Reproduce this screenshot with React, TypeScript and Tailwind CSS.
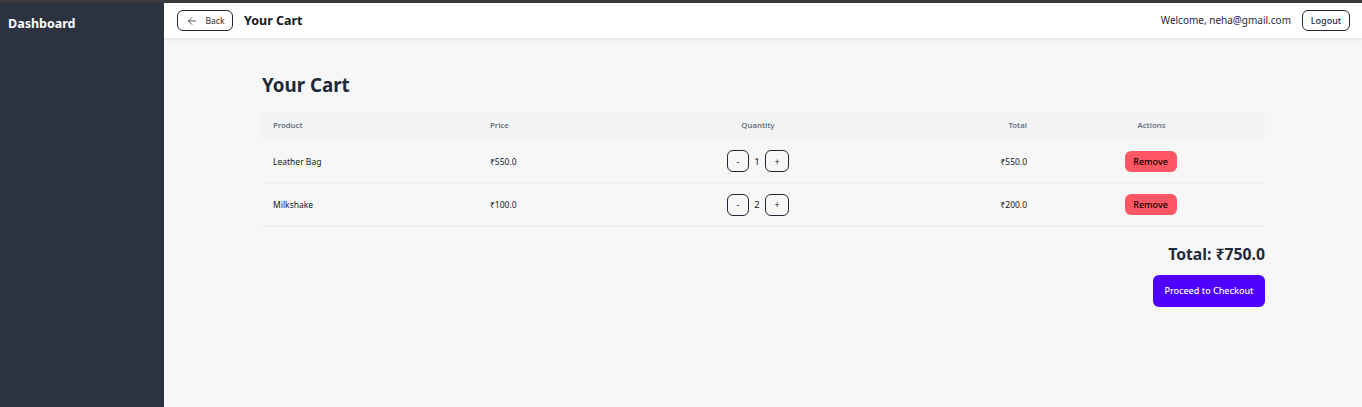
import React from 'react';
import { ArrowLeft } from 'lucide-react';

const items = [
    { name: 'Leather Bag', price: '₹550.0', qty: 1, total: '₹550.0' },
    { name: 'Milkshake', price: '₹100.0', qty: 2, total: '₹200.0' }
];

const QtyButton: React.FC<{ label: string; wide?: boolean }> = ({ label, wide }) => (
    <button className={`h-[22px] ${wide ? 'w-6' : 'w-[22px]'} flex items-center justify-center rounded-md border border-[#1f2937] text-[9px] text-[#111827]`}>
        {label}
    </button>
);

export default function App() {
    return (
        <div className="h-[407px] w-[1362px] overflow-hidden flex flex-col bg-[#f7f7f7] font-['Noto_Sans',sans-serif]">
            <div className="h-[3px] shrink-0 bg-[#3b3b42]"></div>
            <div className="flex flex-1 min-h-0">
                <aside className="w-[164px] shrink-0 bg-[#2b3340] px-2 pt-[12px]">
                    <div className="text-[12.5px] leading-[18px] font-bold text-white">Dashboard</div>
                </aside>
                <div className="flex-1 flex flex-col min-w-0">
                    <header className="h-[35px] shrink-0 bg-white shadow-[0_1px_3px_rgba(0,0,0,0.12)] flex items-center justify-between pl-[13px] pr-3">
                        <div className="flex items-center gap-[11px]">
                            <button className="h-[21px] w-14 flex items-center justify-center gap-[8px] rounded-md border border-[#1f2937] text-[8.5px] text-[#1f2937]">
                                <ArrowLeft className="w-[12px] h-[12px]" strokeWidth={1.5} />
                                <span className="pt-[1px]">Back</span>
                            </button>
                            <span className="pt-[1px] text-[12.5px] font-bold text-[#111827]">Your Cart</span>
                        </div>
                        <div className="flex items-center gap-[11px]">
                            <span className="text-[10px] text-[#1f2937]">Welcome, neha@gmail.com</span>
                            <button className="h-[21px] w-12 flex items-center justify-center rounded-md border border-[#1f2937] text-[9px] font-medium text-[#1f2937]">
                                Logout
                            </button>
                        </div>
                    </header>
                    <main className="flex-1 pl-[98px] pr-[97px] pt-[34px]">
                        <h1 className="text-[18.75px] leading-[26px] font-bold text-[#1f2937] mb-[14px]">Your Cart</h1>
                        <table className="w-full table-fixed border-collapse">
                            <colgroup>
                                <col className="w-[217px]" />
                                <col className="w-[129px]" />
                                <col className="w-[300px]" />
                                <col className="w-[130px]" />
                                <col />
                            </colgroup>
                            <thead>
                                <tr className="h-[28px] bg-[#f3f4f6] text-[7.75px] text-[#6b7280]">
                                    <th className="pl-[11px] text-left font-semibold">Product</th>
                                    <th className="pl-[11px] text-left font-semibold">Price</th>
                                    <th className="text-center font-semibold">Quantity</th>
                                    <th className="pr-[11px] text-right font-semibold">Total</th>
                                    <th className="text-center font-semibold">Actions</th>
                                </tr>
                            </thead>
                            <tbody>
                                {items.map((item, i) => (
                                    <tr key={item.name} className={`h-[43px] text-[8.5px] text-[#111827] border-b ${i === 0 ? 'border-[#f0f0f0]' : 'border-[#e5e7eb]'}`}>
                                        <td className="pl-[11px] pt-[2px]">{item.name}</td>
                                        <td className="pl-[11px] pt-[2px]">{item.price}</td>
                                        <td>
                                            <div className="flex items-center justify-center gap-[5px]">
                                                <QtyButton label="-" />
                                                <span className="w-[6px] pt-[1px] text-center text-[9.5px]">{item.qty}</span>
                                                <QtyButton label="+" wide />
                                            </div>
                                        </td>
                                        <td className="pr-[11px] pt-[2px] text-right">{item.total}</td>
                                        <td>
                                            <div className="flex justify-center pr-[2px]">
                                                <button className="h-[21px] w-[52px] rounded-md bg-[#ff5763] text-[9px] font-medium text-black">Remove</button>
                                            </div>
                                        </td>
                                    </tr>
                                ))}
                            </tbody>
                        </table>
                        <div className="flex flex-col items-end mt-[17px]">
                            <div className="text-[15.75px] leading-5 font-bold text-[#1f2937]">Total: ₹750.0</div>
                            <button className="mt-[11px] h-8 w-28 rounded-md bg-[#4f00ff] text-[9px] font-medium text-white">Proceed to Checkout</button>
                        </div>
                    </main>
                </div>
            </div>
        </div>
    );
}
